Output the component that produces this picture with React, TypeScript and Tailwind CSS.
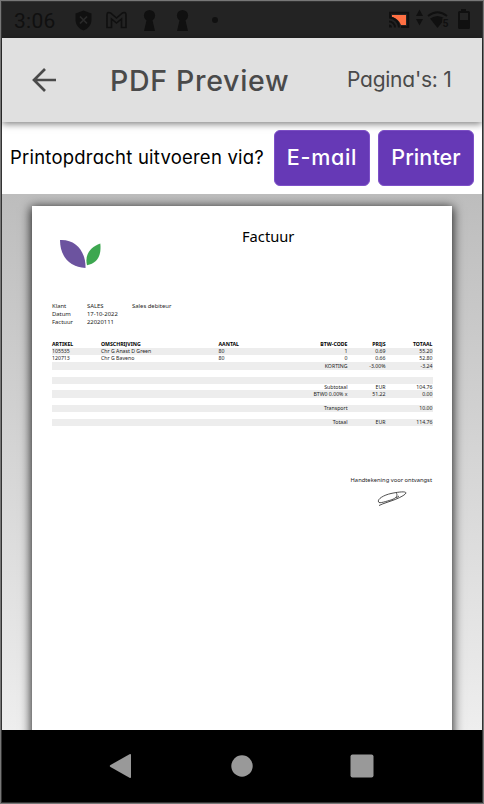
import React from "react";

const rows = [
  { h: "h-[7px]", code: "1", price: "0.69", total: "55.20", art: "105535", desc: "Chr G Anast D Green", qty: "80", gray: true },
  { h: "h-[7px]", code: "0", price: "0.66", total: "52.80", art: "120713", desc: "Chr G Baveno", qty: "80" },
  { h: "h-[8px]", code: "KORTING", price: "-3.00%", total: "-3.24", gray: true },
  { h: "h-[7px]" },
  { h: "h-[7px]", gray: true },
  { h: "h-[6px]", code: "Subtotaal", price: "EUR", total: "104.76" },
  { h: "h-[8px]", code: "BTW0 0.00% x", price: "51.22", total: "0.00", gray: true },
  { h: "h-[7px]" },
  { h: "h-[7px]", code: "Transport", total: "10.00", gray: true },
  { h: "h-[7px]" },
  { h: "h-[7px]", code: "Totaal", price: "EUR", total: "114.76", gray: true },
];

const columns = "grid grid-cols-[49px_117.5px_60px_69px_38px_47px] items-center whitespace-nowrap";

function StatusBar() {
  return (
    <div className="flex h-9 shrink-0 items-center bg-[#232323] pl-3 text-[#101010]">
      <span className="w-[61px] pt-0.5 font-[Roboto] text-[21px] leading-none tracking-[0.3px]">3:06</span>
      <svg className="h-9 w-[145px]" viewBox="75 2 145 36" fill="#101010">
        <path d="M83.500 10.500L91.500 13.500V20C91.500 25 88 29 83.500 30.500C79 29 75.500 25 75.500 20V13.500Z" />
        <path d="M80 16.500L87 23.500M87 16.500L80 23.500" stroke="#292929" strokeWidth="1.700" />
        <path d="M107 27.500V14.500C107 12.500 109 12 110.500 13L116.500 18L122.500 13C124 12 126 12.500 126 14.500V27.500H121.500V19L116.500 23L111.500 19V27.500Z" fill="none" stroke="#101010" strokeWidth="1.600" />
        <circle cx="149.500" cy="15.500" r="5.600" /><path d="M147 18H152L155 31H144Z" />
        <circle cx="182.500" cy="15.500" r="5.600" /><path d="M180 18H185L188 31H177Z" />
        <circle cx="215" cy="20" r="3" />
      </svg>
      <svg className="ml-auto mr-2 h-9 w-[90px]" viewBox="384 2 90 36" fill="#101010">
        <path d="M392 15H406V25H401Q399 19 392 17Z" fill="#ff7043" />
        <path d="M390 17V12.800H408.200V27H401" fill="none" stroke="#101010" strokeWidth="2" />
        <path d="M389 17.500A10 10 0 0 1 399 27.500M389 21.500A6 6 0 0 1 395 27.500" fill="none" stroke="#101010" strokeWidth="2" />
        <path d="M389 24.500A3 3 0 0 1 392 27.500H389Z" />
        <path d="M419.500 9.500L423 16H416ZM416 19H423L419.500 25.500Z" />
        <path d="M428 16Q437.500 8.500 447 16" fill="none" stroke="#101010" strokeWidth="2" />
        <path d="M430 18.500Q437.500 13.500 445 18.500L437.500 28Z" />
        <path d="M442.500 18H450V28H441.500Z" fill="#232323" />
        <text x="442.500" y="26.500" className="font-[Roboto] text-[10.5px] font-bold">5</text>
        <path d="M461 9H466V11H468.500Q470 11 470 12.500V27.500Q470 29 468.500 29H459.500Q458 29 458 27.500V12.500Q458 11 459.500 11H461ZM460 13V20H468V13Z" fillRule="evenodd" />
      </svg>
    </div>
  );
}

function Invoice() {
  return (
    <article className="h-[550px] w-[420px] bg-white pl-5 pt-[21px] font-['Noto_Sans',sans-serif] [font-feature-settings:normal] text-[5.2px] leading-none text-[#222] shadow-[0_2px_10px_1px_rgba(0,0,0,0.85)]">
      <div className="flex h-[74px]">
        <svg className="ml-[7px] mt-[12px] h-[31px] w-[44px]" viewBox="59 239 44 31">
          <path d="M60 240C76 239 86 252 85.500 268C70 267 60 257 60 240Z" fill="#6c539f" />
          <path d="M100.300 243.500C101.500 255 98 263 87 265.300C84.500 255 90 247 100.300 243.500Z" fill="#3da750" />
        </svg>
        <h2 className="ml-[139px] mt-[-1px] text-[14.7px] leading-5 text-black">Factuur</h2>
      </div>
      <div className="mt-[1px] grid grid-cols-[35px_45px_80px] auto-rows-[8px] items-center pt-px text-[5.9px]">
        <span>Klant</span><span>SALES</span><span>Sales debiteur</span>
        <span>Datum</span><span>17-10-2022</span><span />
        <span>Factuur</span><span>22020111</span>
      </div>
      <div className="mt-[14px] w-[380.500px]">
        <div className={`${columns} h-[7px] pt-px font-bold text-black`}>
          <span>ARTIKEL</span><span>OMSCHRIJVING</span><span>AANTAL</span>
          <span className="text-right">BTW-CODE</span><span className="text-right">PRIJS</span><span className="text-right">TOTAAL</span>
        </div>
        {rows.map((r, i) => (
          <div key={i} className={`${columns} ${r.h} pt-px ${r.gray ? "bg-[#ededed]" : ""}`}>
            <span>{r.art}</span><span>{r.desc}</span><span>{r.qty}</span>
            <span className="text-right">{r.code}</span><span className="text-right">{r.price}</span><span className="text-right">{r.total}</span>
          </div>
        ))}
      </div>
      <div className="mt-[50px] flex w-[380px] flex-col items-end">
        <p className="text-[5.8px] leading-2">Handtekening voor ontvangst</p>
        <svg className="mr-[24px] mt-[6px] h-[18px] w-[32px]" viewBox="376 490 32 18" fill="none" stroke="#222" strokeWidth="0.800">
          <path d="M379 505.500Q382 504 388 502C396 499.500 405 495.500 406 493C406 491 398 492 391 493.500C384 495 377 499 378.500 502C379 504 387 501 391 500C397 498 398 495 396 492.500M396 498L399 496" />
        </svg>
      </div>
    </article>
  );
}

export default function App() {
  return (
    <div className="flex h-[804px] w-[484px] flex-col overflow-hidden border border-[#777] bg-[#333] p-px font-[Inter,sans-serif] [font-feature-settings:'cv11']">
      <StatusBar />
      <header className="z-10 flex h-[84px] shrink-0 items-center whitespace-nowrap bg-[#e0e0e0] text-[#4a4a4a] shadow-[0_2px_7px_rgba(0,0,0,0.5)]">
        <svg className="ml-[29px] h-7 w-7" viewBox="0 0 28 28" fill="none" stroke="currentColor" strokeWidth="2.700">
          <path d="M25 14H3M14 3L3 14L14 25" />
        </svg>
        <h1 className="ml-[51px] w-[237px] pt-0.5 text-[28.5px] font-medium leading-10 tracking-[0.7px]">PDF Preview</h1>
        <span className="text-[21px] tracking-[-0.25px]">Pagina's: 1</span>
      </header>
      <section className="flex h-[72px] shrink-0 items-center bg-white pl-2 pr-2 whitespace-nowrap">
        <p className="w-[264px] text-[18.5px] tracking-[0.22px] text-black">Printopdracht uitvoeren via?</p>
        <button className="h-14 w-24 rounded-md border border-[#7d50c8] bg-[#6639b6] pb-0.5 text-[21.5px] font-medium tracking-[0.7px] text-white">E-mail</button>
        <button className="ml-auto h-14 w-24 rounded-md border border-[#7d50c8] bg-[#6639b6] pb-0.5 text-[21.5px] font-medium tracking-[0.1px] text-white">Printer</button>
      </section>
      <main className="h-[536px] shrink-0 overflow-hidden bg-linear-to-b from-[#bdbdbd] to-[#eeeeee] pl-[30px] pt-3">
        <Invoice />
      </main>
      <nav className="h-[72px] shrink-0 bg-black">
        <svg className="h-[72px] w-[480px]" viewBox="2 730 480 72" fill="#999">
          <path d="M110.500 765L129.500 754.200Q131 753.500 131 755V777Q131 778.500 129.500 777.800L110.500 767Q109 766 110.500 765Z" />
          <circle cx="242" cy="766" r="10.700" />
          <rect x="350.500" y="754.500" width="23" height="23" rx="2" />
        </svg>
      </nav>
    </div>
  );
}
